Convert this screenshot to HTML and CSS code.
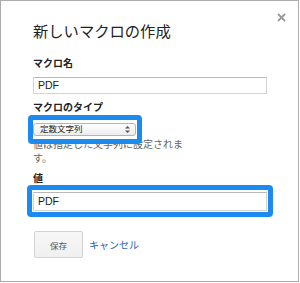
FILE: index.html
```html
<!DOCTYPE html>
<html lang="ja">
<head>
  <meta charset="UTF-8" />
  <title>新しいマクロの作成</title>
  <link rel="stylesheet" href="styles.css">
</head>
<body>
  <div class="dialog">
    <span class="close">
      <svg width="9" height="9" viewBox="0 0 9 9"><path d="M1 1L8 8M8 1L1 8" stroke="#9a9a9a" stroke-width="1.8"/></svg>
    </span>

    <h1 class="title">新しいマクロの作成</h1>

    <label class="label label-name">マクロ名</label>
    <div class="input">PDF</div>

    <label class="label label-type">マクロのタイプ</label>
    <div class="highlight highlight-select">
      <div class="select">
        <span>定数文字列</span>
        <svg width="5" height="7" viewBox="0 0 5 7"><path d="M2.5 0L5 2.6H0ZM2.5 7L0 4.4H5Z" fill="#555"/></svg>
      </div>
    </div>
    <p class="desc">値は指定した文字列に設定されます。</p>

    <label class="label label-value">値</label>
    <div class="highlight highlight-input">
      <div class="input input-tall">PDF</div>
    </div>

    <div class="actions">
      <button class="btn">保存</button>
      <a class="link">キャンセル</a>
    </div>
  </div>
</body>
</html>
```

FILE: styles.css
```css
body {
  margin: 0;
  background: #fff;
  font-family: "Liberation Sans", "Noto Sans CJK JP", sans-serif;
  color: #222;
}

.dialog {
  position: relative;
  width: 299px;
  height: 282px;
  box-sizing: border-box;
  border: 1px solid #acacac;
  padding: 21px 0 0 32px;
  background: #fff;
}

.close {
  position: absolute;
  top: 12px;
  left: 276px;
  line-height: 0;
}

.title {
  margin: 0;
  font-size: 15.3px;
  line-height: 20px;
  font-weight: normal;
  color: #222;
}

.label {
  display: block;
  font-size: 10px;
  line-height: 14px;
  font-weight: bold;
  color: #222;
}

.label-name {
  margin-top: 15px;
}

.label-type {
  margin-top: 7px;
}

.label-value {
  margin-top: 6px;
}

.input {
  width: 234px;
  height: 17px;
  box-sizing: border-box;
  margin-top: 6px;
  border: 1px solid #d4d4d4;
  border-top-color: #b9b9b9;
  padding: 0 4px;
  font-size: 10.5px;
  line-height: 15px;
  color: #222;
  background: #fff;
}

.input-tall {
  height: 19px;
  line-height: 17px;
  margin-top: 0;
}

.highlight {
  position: relative;
}

.highlight::after {
  content: "";
  position: absolute;
  border: 5px solid #1b8bf0;
  border-radius: 4px;
  pointer-events: none;
}

.highlight-select {
  width: 103px;
  margin-top: 8px;
}

.highlight-select::after {
  top: -8px;
  bottom: -8px;
  left: -5px;
  right: -6px;
}

.highlight-input {
  width: 234px;
  margin-top: 6px;
}

.highlight-input::after {
  top: -7px;
  bottom: -6px;
  left: -6px;
  right: -6px;
}

.select {
  display: flex;
  align-items: center;
  justify-content: space-between;
  height: 13px;
  box-sizing: border-box;
  border: 1px solid #b4b4b4;
  border-radius: 3px;
  padding: 0 5px 0 6px;
  background: linear-gradient(#ffffff, #ececec);
  font-size: 8.5px;
  line-height: 11px;
  color: #222;
}

.desc {
  width: 155px;
  margin: 2px 0 0;
  font-size: 10px;
  line-height: 14px;
  color: #666;
}

.actions {
  display: flex;
  align-items: center;
  gap: 6px;
  margin-top: 20px;
}

.btn {
  width: 49px;
  height: 27px;
  margin-left: 1px;
  border: 1px solid #d3d3d3;
  border-radius: 2px;
  background: linear-gradient(#f7f7f7, #f0f0f0);
  font-family: "Liberation Sans", "Noto Sans CJK JP", sans-serif;
  font-size: 8.5px;
  color: #555;
  padding: 0;
}

.link {
  font-size: 10px;
  color: #2a5fb5;
}
```
